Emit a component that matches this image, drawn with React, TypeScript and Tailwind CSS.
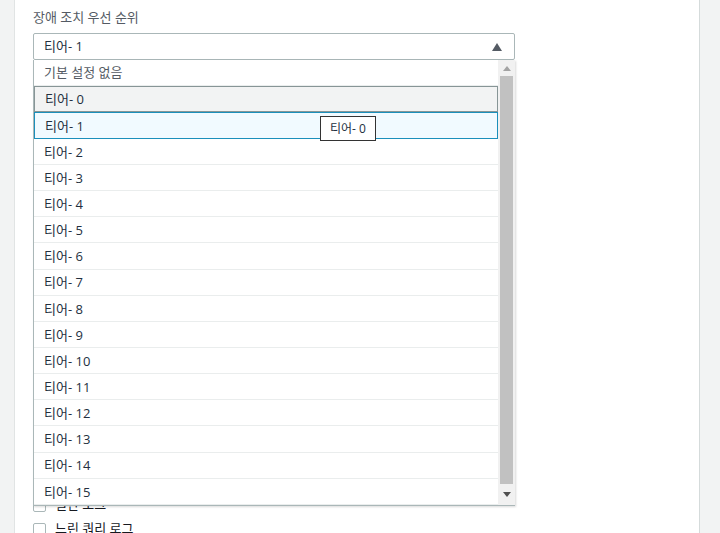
const tiers = Array.from({ length: 16 }, (_, i) => `티어- ${i}`);

function Checkbox({ label }: { label: string }) {
  return (
    <div className="flex items-center gap-[9px] h-[24px]">
      <span className="w-[13px] h-[13px] border border-[#aab7b8] rounded-[2px] bg-white" />
      <span className="text-[13px] text-[#16191f]">{label}</span>
    </div>
  );
}

export default function App() {
  return (
    <div
      className="w-[720px] h-[533px] flex overflow-hidden bg-[#f2f3f3]"
      style={{ fontFamily: '"Open Sans", "Noto Sans CJK KR", sans-serif' }}
    >
      {/* left rail */}
      <div className="w-[15px] shrink-0 bg-[#f2f3f3] border-r border-[#e1e4e4]" />

      {/* main panel */}
      <div className="w-[684px] shrink-0 bg-white pl-[18px] pt-[7px]">
        <div className="text-[13px] leading-[20px] text-[#545b64] mb-[6px]">장애 조치 우선 순위</div>

        <div className="relative w-[482px]">
          <div className="h-[27px] border border-[#aab7b8] rounded-[2px] flex items-center justify-between pl-[10px] pr-[12px] pt-[1px] text-[13px] text-[#232f3e]">
            <span>티어- 1</span>
            <svg width="10" height="8" viewBox="0 0 10 8">
              <path d="M5 0 L10 8 L0 8 Z" fill="#545b64" />
            </svg>
          </div>

          {/* dropdown list */}
          <div className="absolute left-0 top-[27px] w-[482px] h-[446px] bg-white border-l border-b border-[#aab7b8] shadow-[1px_1px_2px_rgba(0,0,0,0.15)] z-10 flex">
            <div className="flex-1 flex flex-col">
              <div className="h-[26px] flex items-center pl-[10px] pt-[1px] text-[13px] text-[#545b64] border-b border-[#eaeded]">
                기본 설정 없음
              </div>
              {tiers.map((t, i) => (
                <div
                  key={t}
                  className={
                    i === 0
                      ? 'h-[26px] flex items-center pl-[10px] pt-[2px] text-[13px] text-[#232f3e] bg-[#f2f3f3] border border-[#879596]'
                      : i === 1
                        ? 'h-[27px] flex items-center pl-[10px] pt-[2px] text-[13px] text-[#232f3e] bg-[#f1faff] border border-[#1b8fbb]'
                        : 'h-[26.25px] flex items-center pl-[10px] pt-[2px] text-[13px] text-[#232f3e] border-b border-[#eaeded]'
                  }
                >
                  {t}
                </div>
              ))}
            </div>
            {/* scrollbar */}
            <div className="w-[17px] shrink-0 bg-[#f1f1f1] flex flex-col items-center">
              <div className="h-[16px] flex items-center justify-center">
                <svg width="8" height="5" viewBox="0 0 8 5">
                  <path d="M4 0 L8 5 L0 5 Z" fill="#a3a3a3" />
                </svg>
              </div>
              <div className="w-[13px] h-[408px] bg-[#c1c1c1]" />
              <div className="flex-1 flex items-center justify-center">
                <svg width="8" height="5" viewBox="0 0 8 5">
                  <path d="M0 0 L8 0 L4 5 Z" fill="#505050" />
                </svg>
              </div>
            </div>
          </div>

          {/* tooltip */}
          <div className="absolute left-[287px] top-[83px] z-20 h-[25px] px-[9px] pt-[1px] flex items-center bg-white border border-[#333] text-[12px] text-[#232f3e]">
            티어- 0
          </div>
        </div>

        {/* content hidden beneath the open list */}
        <div className="h-[433px]" />
        <div className="flex flex-col">
          <Checkbox label="일반 로그" />
          <Checkbox label="느린 쿼리 로그" />
        </div>
      </div>

      {/* right rail */}
      <div className="flex-1 bg-[#f2f3f3] border-l border-[#d5dbdb]" />
    </div>
  );
}
